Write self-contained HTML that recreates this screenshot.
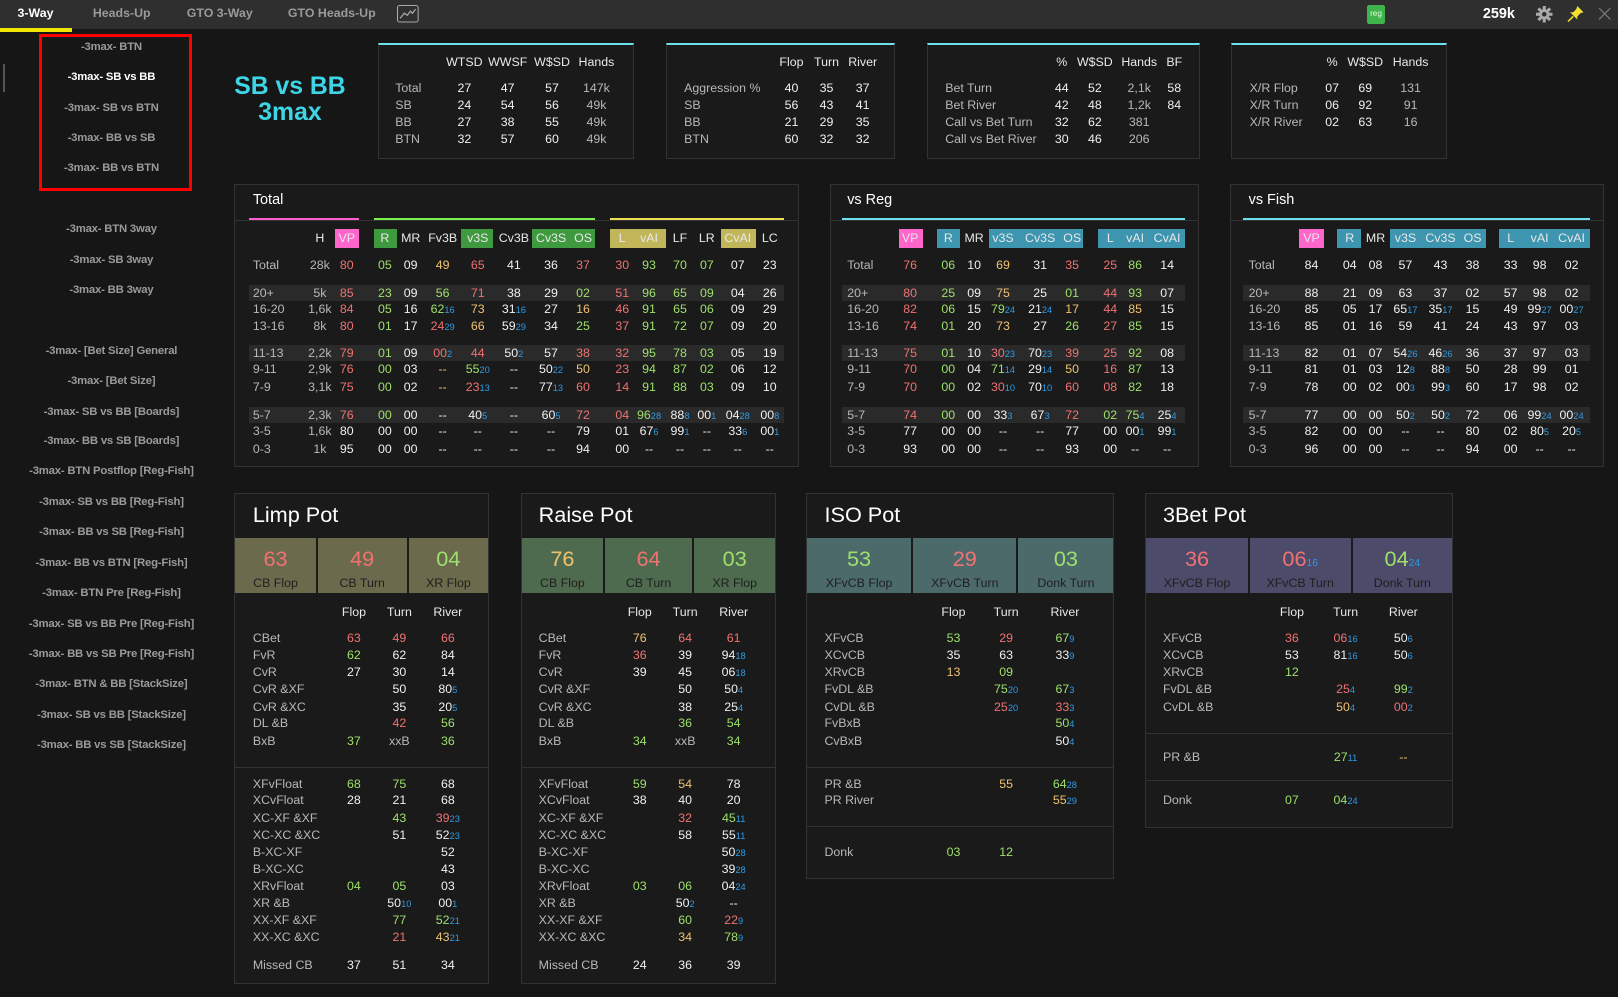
<!DOCTYPE html>
<html><head><meta charset="utf-8">
<style>
*{margin:0;padding:0;box-sizing:border-box}
html,body{background:#161616;overflow:hidden}
body{zoom:1.0319;width:1568px;height:966px;position:relative;font-family:"Liberation Sans",sans-serif;color:#f0f0f0;font-size:12px}
.a{position:absolute}
.top{left:0;top:0;width:1568px;height:28px;background:#2f2f2f}
.tab{position:absolute;top:6px;font-size:12px;font-weight:bold;color:#9a9a9a}
.side{position:absolute;left:108px;transform:translateX(-50%);font-size:11px;font-weight:bold;color:#9a9a9a;white-space:nowrap;letter-spacing:-0.2px}
.box{position:absolute;background:#1a1a1a;border:1px solid #333}
.cy{border-top:2px solid #6ee0ea}
.r{position:absolute;left:0;height:16px;line-height:16px;width:0}
.r>span{position:absolute;transform:translateX(-50%);white-space:nowrap;color:#f0f0f0}
.r>span:first-child{transform:none;color:#b8b8b8}
.r>span.rr{color:#f07272}.r>span.g{color:#9ee06b}.r>span.y{color:#f0c270}.r>span.k{color:#b8b8b8}
.r b{font-size:9px;color:#2e9be6;font-weight:normal}
.hd>span{color:#e8e8e8}
.band{position:absolute;height:16px;background:#2a2a2a}
.hb{position:absolute;top:222px;height:18px}
.ln{position:absolute;top:211px;height:2px}
.ptitle{position:absolute;font-size:21px;color:#fff}
.tile{position:absolute;top:521px;height:54px;text-align:center}
.tile .n{display:block;font-size:21px;margin-top:9px;line-height:24px;height:24px}
.tile .l{display:block;font-size:12px;color:#1e1e1e;line-height:14px;margin-top:4px}
.tile b{font-size:10px;color:#2e9be6;font-weight:normal;line-height:0}
.sep{position:absolute;height:1px;background:#333}
.S1>span:nth-child(1){left:383px}.S1>span:nth-child(2){left:450px}.S1>span:nth-child(3){left:492px}.S1>span:nth-child(4){left:535px}.S1>span:nth-child(5){left:578px}
.S2>span:nth-child(1){left:663px}.S2>span:nth-child(2){left:767px}.S2>span:nth-child(3){left:801px}.S2>span:nth-child(4){left:836px}
.S3>span:nth-child(1){left:916px}.S3>span:nth-child(2){left:1029px}.S3>span:nth-child(3){left:1061px}.S3>span:nth-child(4){left:1104px}.S3>span:nth-child(5){left:1138px}
.S4>span:nth-child(1){left:1211px}.S4>span:nth-child(2){left:1291px}.S4>span:nth-child(3){left:1323px}.S4>span:nth-child(4){left:1367px}
.TT>span:nth-child(1){left:245px}.TT>span:nth-child(2){left:310px;color:#b8b8b8}.TT>span:nth-child(3){left:336px}.TT>span:nth-child(4){left:373px}.TT>span:nth-child(5){left:398px}.TT>span:nth-child(6){left:429px}.TT>span:nth-child(7){left:463px}.TT>span:nth-child(8){left:498px}.TT>span:nth-child(9){left:534px}.TT>span:nth-child(10){left:565px}.TT>span:nth-child(11){left:603px}.TT>span:nth-child(12){left:629px}.TT>span:nth-child(13){left:659px}.TT>span:nth-child(14){left:685px}.TT>span:nth-child(15){left:715px}.TT>span:nth-child(16){left:746px}
.VR>span:nth-child(1){left:821px}.VR>span:nth-child(2){left:882px}.VR>span:nth-child(3){left:919px}.VR>span:nth-child(4){left:944px}.VR>span:nth-child(5){left:972px}.VR>span:nth-child(6){left:1008px}.VR>span:nth-child(7){left:1039px}.VR>span:nth-child(8){left:1076px}.VR>span:nth-child(9){left:1100px}.VR>span:nth-child(10){left:1131px}
.VF>span:nth-child(1){left:1210px}.VF>span:nth-child(2){left:1271px}.VF>span:nth-child(3){left:1308px}.VF>span:nth-child(4){left:1333px}.VF>span:nth-child(5){left:1362px}.VF>span:nth-child(6){left:1396px}.VF>span:nth-child(7){left:1427px}.VF>span:nth-child(8){left:1464px}.VF>span:nth-child(9){left:1492px}.VF>span:nth-child(10){left:1523px}
.LP>span:nth-child(1){left:245px}.LP>span:nth-child(2){left:343px}.LP>span:nth-child(3){left:387px}.LP>span:nth-child(4){left:434px}
.RP>span:nth-child(1){left:522px}.RP>span:nth-child(2){left:620px}.RP>span:nth-child(3){left:664px}.RP>span:nth-child(4){left:711px}
.IP>span:nth-child(1){left:799px}.IP>span:nth-child(2){left:924px}.IP>span:nth-child(3){left:975px}.IP>span:nth-child(4){left:1032px}
.BP>span:nth-child(1){left:1127px}.BP>span:nth-child(2){left:1252px}.BP>span:nth-child(3){left:1304px}.BP>span:nth-child(4){left:1360px}
.hd>span:first-child{color:#e8e8e8}
</style></head><body>

<div class="a top"></div>
<div class="a" style="left:0;top:27px;width:70px;height:4px;background:#f2e600"></div>
<div class="tab" style="left:17px;color:#fff">3-Way</div>
<div class="tab" style="left:90px">Heads-Up</div>
<div class="tab" style="left:181px">GTO 3-Way</div>
<div class="tab" style="left:279px">GTO Heads-Up</div>
<svg class="a" style="left:385px;top:5px" width="21" height="17" viewBox="0 0 21 17"><rect x="0.5" y="0.5" width="20" height="16" rx="2" fill="none" stroke="#aaa"/><path d="M3 13 L7 8 L10 10 L13 6 L15 8 L18 4" fill="none" stroke="#aaa" stroke-width="1.2"/></svg>
<div class="a" style="left:1325px;top:5px;width:17px;height:18px;background:#3fb44a;border-radius:2px;color:#dfd;font-size:8px;line-height:18px;text-align:center">reg</div>
<div class="a" style="left:1437px;top:6px;font-size:14px;font-weight:bold;color:#fff">259k</div>
<svg class="a" style="left:1489px;top:6px" width="16" height="16" viewBox="0 0 16 16"><g fill="#aaa"><circle cx="8" cy="8" r="5"/><rect x="6.5" y="0" width="3" height="16"/><rect x="0" y="6.5" width="16" height="3"/><rect x="6.5" y="0" width="3" height="16" transform="rotate(45 8 8)"/><rect x="6.5" y="0" width="3" height="16" transform="rotate(-45 8 8)"/></g><circle cx="8" cy="8" r="2.2" fill="#2f2f2f"/></svg>
<svg class="a" style="left:1519px;top:5px" width="17" height="17" viewBox="0 0 17 17"><path d="M10 1 L16 7 L13 8 L10 11 L10 14 L3 7 L6 7 L9 4 Z" fill="#f2e033"/><path d="M6 11 L1 16" stroke="#f2e033" stroke-width="1.5"/></svg>
<svg class="a" style="left:1549px;top:7px" width="13" height="13" viewBox="0 0 13 13"><path d="M1 1 L12 12 M12 1 L1 12" stroke="#777" stroke-width="1.2"/></svg>

<div class="a" style="left:3px;top:62px;width:2px;height:27px;background:#555"></div>
<div class="a" style="left:38px;top:33px;width:148px;height:152px;border:3px solid #f00"></div>
<div class="side" style="top:40px">-3max- BTN</div>
<div class="side" style="top:69px;color:#fff">-3max- SB vs BB</div>
<div class="side" style="top:99px">-3max- SB vs BTN</div>
<div class="side" style="top:128px">-3max- BB vs SB</div>
<div class="side" style="top:157px">-3max- BB vs BTN</div>
<div class="side" style="top:216px">-3max- BTN 3way</div>
<div class="side" style="top:246px">-3max- SB 3way</div>
<div class="side" style="top:275px">-3max- BB 3way</div>
<div class="side" style="top:334px">-3max- [Bet Size] General</div>
<div class="side" style="top:363px">-3max- [Bet Size]</div>
<div class="side" style="top:393px">-3max- SB vs BB [Boards]</div>
<div class="side" style="top:422px">-3max- BB vs SB [Boards]</div>
<div class="side" style="top:451px">-3max- BTN Postflop [Reg-Fish]</div>
<div class="side" style="top:481px">-3max- SB vs BB [Reg-Fish]</div>
<div class="side" style="top:510px">-3max- BB vs SB [Reg-Fish]</div>
<div class="side" style="top:540px">-3max- BB vs BTN [Reg-Fish]</div>
<div class="side" style="top:569px">-3max- BTN Pre [Reg-Fish]</div>
<div class="side" style="top:599px">-3max- SB vs BB Pre [Reg-Fish]</div>
<div class="side" style="top:628px">-3max- BB vs SB Pre [Reg-Fish]</div>
<div class="side" style="top:657px">-3max- BTN &amp; BB [StackSize]</div>
<div class="side" style="top:687px">-3max- SB vs BB [StackSize]</div>
<div class="side" style="top:716px">-3max- BB vs SB [StackSize]</div>

<div class="a" style="left:220px;top:72px;width:122px;text-align:center;color:#3dd6e6;font-size:24px;font-weight:bold;line-height:25px">SB vs BB<br>3max</div>

<div class="box cy" style="left:366px;top:42px;width:248px;height:112px"></div>
<div class="box cy" style="left:645px;top:42px;width:222px;height:112px"></div>
<div class="box cy" style="left:898px;top:42px;width:265px;height:112px"></div>
<div class="box cy" style="left:1193px;top:42px;width:209px;height:112px"></div>
<div class="r S1 hd" style="top:52px"><span></span><span>WTSD</span><span>WWSF</span><span>W$SD</span><span>Hands</span></div>
<div class="r S1" style="top:78px"><span>Total</span><span>27</span><span>47</span><span>57</span><span class="k">147k</span></div>
<div class="r S1" style="top:94px"><span>SB</span><span>24</span><span>54</span><span>56</span><span class="k">49k</span></div>
<div class="r S1" style="top:110px"><span>BB</span><span>27</span><span>38</span><span>55</span><span class="k">49k</span></div>
<div class="r S1" style="top:127px"><span>BTN</span><span>32</span><span>57</span><span>60</span><span class="k">49k</span></div>
<div class="r S2 hd" style="top:52px"><span></span><span>Flop</span><span>Turn</span><span>River</span></div>
<div class="r S2" style="top:78px"><span>Aggression %</span><span>40</span><span>35</span><span>37</span></div>
<div class="r S2" style="top:94px"><span>SB</span><span>56</span><span>43</span><span>41</span></div>
<div class="r S2" style="top:110px"><span>BB</span><span>21</span><span>29</span><span>35</span></div>
<div class="r S2" style="top:127px"><span>BTN</span><span>60</span><span>32</span><span>32</span></div>
<div class="r S3 hd" style="top:52px"><span></span><span>%</span><span>W$SD</span><span>Hands</span><span>BF</span></div>
<div class="r S3" style="top:78px"><span>Bet Turn</span><span>44</span><span>52</span><span class="k">2,1k</span><span>58</span></div>
<div class="r S3" style="top:94px"><span>Bet River</span><span>42</span><span>48</span><span class="k">1,2k</span><span>84</span></div>
<div class="r S3" style="top:110px"><span>Call vs Bet Turn</span><span>32</span><span>62</span><span class="k">381</span><span></span></div>
<div class="r S3" style="top:127px"><span>Call vs Bet River</span><span>30</span><span>46</span><span class="k">206</span><span></span></div>
<div class="r S4 hd" style="top:52px"><span></span><span>%</span><span>W$SD</span><span>Hands</span></div>
<div class="r S4" style="top:78px"><span>X/R Flop</span><span>07</span><span>69</span><span class="k">131</span></div>
<div class="r S4" style="top:94px"><span>X/R Turn</span><span>06</span><span>92</span><span class="k">91</span></div>
<div class="r S4" style="top:110px"><span>X/R River</span><span>02</span><span>63</span><span class="k">16</span></div>

<div class="box" style="left:227px;top:178px;width:547px;height:275px"></div>
<div class="box" style="left:804px;top:178px;width:358px;height:275px"></div>
<div class="box" style="left:1192px;top:178px;width:362px;height:275px"></div>
<div class="sep" style="left:228px;top:213px;width:545px"></div>
<div class="sep" style="left:805px;top:213px;width:356px"></div>
<div class="sep" style="left:1193px;top:213px;width:360px"></div>
<div class="a" style="left:245px;top:186px;font-size:14px;color:#fff">Total</div>
<div class="a" style="left:821px;top:186px;font-size:14px;color:#fff">vs Reg</div>
<div class="a" style="left:1210px;top:186px;font-size:14px;color:#fff">vs Fish</div>

<div class="ln" style="left:241px;width:107px;background:#ff5fcf"></div>
<div class="ln" style="left:362px;width:215px;background:#7cf04a"></div>
<div class="ln" style="left:591px;width:169px;background:#f0e050"></div>
<div class="ln" style="left:816px;width:332px;background:#6ee0ea"></div>
<div class="ln" style="left:1205px;width:336px;background:#6ee0ea"></div>

<div class="hb" style="left:325px;width:23px;background:#ff66cc"></div>
<div class="hb" style="left:362px;width:23px;background:#3f9a3f"></div>
<div class="hb" style="left:447px;width:31px;background:#3f9a3f"></div>
<div class="hb" style="left:516px;width:61px;background:#3f9a3f"></div>
<div class="hb" style="left:591px;width:54px;background:#c2b65a"></div>
<div class="hb" style="left:699px;width:34px;background:#c2b65a"></div>
<div class="hb" style="left:871px;width:23px;background:#ff66cc"></div>
<div class="hb" style="left:908px;width:22px;background:#3d95b0"></div>
<div class="hb" style="left:958px;width:92px;background:#3d95b0"></div>
<div class="hb" style="left:1064px;width:84px;background:#3d95b0"></div>
<div class="hb" style="left:1259px;width:24px;background:#ff66cc"></div>
<div class="hb" style="left:1296px;width:23px;background:#3d95b0"></div>
<div class="hb" style="left:1347px;width:93px;background:#3d95b0"></div>
<div class="hb" style="left:1453px;width:88px;background:#3d95b0"></div>

<div class="band" style="left:241px;top:276px;width:519px"></div>
<div class="band" style="left:241px;top:334px;width:519px"></div>
<div class="band" style="left:241px;top:394px;width:519px"></div>
<div class="band" style="left:816px;top:276px;width:332px"></div>
<div class="band" style="left:816px;top:334px;width:332px"></div>
<div class="band" style="left:816px;top:394px;width:332px"></div>
<div class="band" style="left:1205px;top:276px;width:336px"></div>
<div class="band" style="left:1205px;top:334px;width:336px"></div>
<div class="band" style="left:1205px;top:394px;width:336px"></div>

<div class="r TT hd" style="top:223px"><span></span><span style="color:#e8e8e8">H</span><span>VP</span><span>R</span><span>MR</span><span>Fv3B</span><span>v3S</span><span>Cv3B</span><span>Cv3S</span><span>OS</span><span>L</span><span>vAI</span><span>LF</span><span>LR</span><span>CvAI</span><span>LC</span></div>
<div class="r TT" style="top:249px"><span>Total</span><span>28k</span><span class="rr">80</span><span class="g">05</span><span>09</span><span class="y">49</span><span class="rr">65</span><span>41</span><span>36</span><span class="rr">37</span><span class="rr">30</span><span class="g">93</span><span class="g">70</span><span class="g">07</span><span>07</span><span>23</span></div>
<div class="r TT" style="top:276px"><span>20+</span><span>5k</span><span class="rr">85</span><span class="g">23</span><span>09</span><span class="g">56</span><span class="rr">71</span><span>38</span><span>29</span><span class="g">02</span><span class="rr">51</span><span class="g">96</span><span class="g">65</span><span class="g">09</span><span>04</span><span>26</span></div>
<div class="r TT" style="top:292px"><span>16-20</span><span>1,6k</span><span class="rr">84</span><span class="g">05</span><span>16</span><span class="g">62<b>16</b></span><span class="y">73</span><span>31<b>16</b></span><span>27</span><span class="y">16</span><span class="rr">46</span><span class="g">91</span><span class="g">65</span><span class="g">06</span><span>09</span><span>29</span></div>
<div class="r TT" style="top:308px"><span>13-16</span><span>8k</span><span class="rr">80</span><span class="g">01</span><span>17</span><span class="rr">24<b>29</b></span><span class="y">66</span><span>59<b>29</b></span><span>34</span><span class="g">25</span><span class="rr">37</span><span class="g">91</span><span class="g">72</span><span class="g">07</span><span>09</span><span>20</span></div>
<div class="r TT" style="top:334px"><span>11-13</span><span>2,2k</span><span class="rr">79</span><span class="g">01</span><span>09</span><span class="rr">00<b>2</b></span><span class="rr">44</span><span>50<b>2</b></span><span>57</span><span class="rr">38</span><span class="rr">32</span><span class="g">95</span><span class="g">78</span><span class="g">03</span><span>05</span><span>19</span></div>
<div class="r TT" style="top:350px"><span>9-11</span><span>2,9k</span><span class="rr">76</span><span class="g">00</span><span>03</span><span class="y">--</span><span class="g">55<b>20</b></span><span>--</span><span>50<b>22</b></span><span class="y">50</span><span class="rr">23</span><span class="g">94</span><span class="g">87</span><span class="g">02</span><span>06</span><span>12</span></div>
<div class="r TT" style="top:367px"><span>7-9</span><span>3,1k</span><span class="rr">75</span><span class="g">00</span><span>02</span><span class="y">--</span><span class="rr">23<b>13</b></span><span>--</span><span>77<b>13</b></span><span class="rr">60</span><span class="rr">14</span><span class="g">91</span><span class="g">88</span><span class="g">03</span><span>09</span><span>10</span></div>
<div class="r TT" style="top:394px"><span>5-7</span><span>2,3k</span><span class="rr">76</span><span class="g">00</span><span>00</span><span>--</span><span>40<b>5</b></span><span>--</span><span>60<b>5</b></span><span class="rr">72</span><span class="rr">04</span><span class="g">96<b>28</b></span><span>88<b>8</b></span><span>00<b>1</b></span><span>04<b>28</b></span><span>00<b>8</b></span></div>
<div class="r TT" style="top:410px"><span>3-5</span><span>1,6k</span><span>80</span><span>00</span><span>00</span><span>--</span><span>--</span><span>--</span><span>--</span><span>79</span><span>01</span><span>67<b>6</b></span><span>99<b>1</b></span><span>--</span><span>33<b>6</b></span><span>00<b>1</b></span></div>
<div class="r TT" style="top:427px"><span>0-3</span><span>1k</span><span>95</span><span>00</span><span>00</span><span>--</span><span>--</span><span>--</span><span>--</span><span>94</span><span>00</span><span>--</span><span>--</span><span>--</span><span>--</span><span>--</span></div>

<div class="r VR hd" style="top:223px"><span></span><span>VP</span><span>R</span><span>MR</span><span>v3S</span><span>Cv3S</span><span>OS</span><span>L</span><span>vAI</span><span>CvAI</span></div>
<div class="r VR" style="top:249px"><span>Total</span><span class="rr">76</span><span class="g">06</span><span>10</span><span class="y">69</span><span>31</span><span class="rr">35</span><span class="rr">25</span><span class="g">86</span><span>14</span></div>
<div class="r VR" style="top:276px"><span>20+</span><span class="rr">80</span><span class="g">25</span><span>09</span><span class="y">75</span><span>25</span><span class="g">01</span><span class="rr">44</span><span class="g">93</span><span>07</span></div>
<div class="r VR" style="top:292px"><span>16-20</span><span class="rr">82</span><span class="g">06</span><span>15</span><span class="g">79<b>24</b></span><span>21<b>24</b></span><span class="y">17</span><span class="rr">44</span><span class="y">85</span><span>15</span></div>
<div class="r VR" style="top:308px"><span>13-16</span><span class="rr">74</span><span class="g">01</span><span>20</span><span class="y">73</span><span>27</span><span class="g">26</span><span class="rr">27</span><span class="g">85</span><span>15</span></div>
<div class="r VR" style="top:334px"><span>11-13</span><span class="rr">75</span><span class="g">01</span><span>10</span><span class="rr">30<b>23</b></span><span>70<b>23</b></span><span class="rr">39</span><span class="rr">25</span><span class="g">92</span><span>08</span></div>
<div class="r VR" style="top:350px"><span>9-11</span><span class="rr">70</span><span class="g">00</span><span>04</span><span class="g">71<b>14</b></span><span>29<b>14</b></span><span class="y">50</span><span class="rr">16</span><span class="g">87</span><span>13</span></div>
<div class="r VR" style="top:367px"><span>7-9</span><span class="rr">70</span><span class="g">00</span><span>02</span><span class="rr">30<b>10</b></span><span>70<b>10</b></span><span class="rr">60</span><span class="rr">08</span><span class="g">82</span><span>18</span></div>
<div class="r VR" style="top:394px"><span>5-7</span><span class="rr">74</span><span class="g">00</span><span>00</span><span>33<b>3</b></span><span>67<b>3</b></span><span class="rr">72</span><span class="g">02</span><span class="g">75<b>4</b></span><span>25<b>4</b></span></div>
<div class="r VR" style="top:410px"><span>3-5</span><span>77</span><span>00</span><span>00</span><span>--</span><span>--</span><span>77</span><span>00</span><span>00<b>1</b></span><span>99<b>1</b></span></div>
<div class="r VR" style="top:427px"><span>0-3</span><span>93</span><span>00</span><span>00</span><span>--</span><span>--</span><span>93</span><span>00</span><span>--</span><span>--</span></div>

<div class="r VF hd" style="top:223px"><span></span><span>VP</span><span>R</span><span>MR</span><span>v3S</span><span>Cv3S</span><span>OS</span><span>L</span><span>vAI</span><span>CvAI</span></div>
<div class="r VF" style="top:249px"><span>Total</span><span>84</span><span>04</span><span>08</span><span>57</span><span>43</span><span>38</span><span>33</span><span>98</span><span>02</span></div>
<div class="r VF" style="top:276px"><span>20+</span><span>88</span><span>21</span><span>09</span><span>63</span><span>37</span><span>02</span><span>57</span><span>98</span><span>02</span></div>
<div class="r VF" style="top:292px"><span>16-20</span><span>85</span><span>05</span><span>17</span><span>65<b>17</b></span><span>35<b>17</b></span><span>15</span><span>49</span><span>99<b>27</b></span><span>00<b>27</b></span></div>
<div class="r VF" style="top:308px"><span>13-16</span><span>85</span><span>01</span><span>16</span><span>59</span><span>41</span><span>24</span><span>43</span><span>97</span><span>03</span></div>
<div class="r VF" style="top:334px"><span>11-13</span><span>82</span><span>01</span><span>07</span><span>54<b>26</b></span><span>46<b>26</b></span><span>36</span><span>37</span><span>97</span><span>03</span></div>
<div class="r VF" style="top:350px"><span>9-11</span><span>81</span><span>01</span><span>03</span><span>12<b>8</b></span><span>88<b>8</b></span><span>50</span><span>28</span><span>99</span><span>01</span></div>
<div class="r VF" style="top:367px"><span>7-9</span><span>78</span><span>00</span><span>02</span><span>00<b>3</b></span><span>99<b>3</b></span><span>60</span><span>17</span><span>98</span><span>02</span></div>
<div class="r VF" style="top:394px"><span>5-7</span><span>77</span><span>00</span><span>00</span><span>50<b>2</b></span><span>50<b>2</b></span><span>72</span><span>06</span><span>99<b>24</b></span><span>00<b>24</b></span></div>
<div class="r VF" style="top:410px"><span>3-5</span><span>82</span><span>00</span><span>00</span><span>--</span><span>--</span><span>80</span><span>02</span><span>80<b>5</b></span><span>20<b>5</b></span></div>
<div class="r VF" style="top:427px"><span>0-3</span><span>96</span><span>00</span><span>00</span><span>--</span><span>--</span><span>94</span><span>00</span><span>--</span><span>--</span></div>

<div class="box" style="left:227px;top:478px;width:247px;height:476px"></div>
<div class="box" style="left:505px;top:478px;width:247px;height:476px"></div>
<div class="box" style="left:781px;top:478px;width:299px;height:374px"></div>
<div class="box" style="left:1110px;top:478px;width:298px;height:324px"></div>
<div class="ptitle" style="left:245px;top:486px">Limp Pot</div>
<div class="ptitle" style="left:522px;top:486px">Raise Pot</div>
<div class="ptitle" style="left:799px;top:486px">ISO Pot</div>
<div class="ptitle" style="left:1127px;top:486px">3Bet Pot</div>

<div class="tile" style="left:228px;width:78px;background:#6b6a4d"><span class="n" style="color:#f07272">63</span><span class="l">CB Flop</span></div>
<div class="tile" style="left:308px;width:86px;background:#6b6a4d"><span class="n" style="color:#f07272">49</span><span class="l">CB Turn</span></div>
<div class="tile" style="left:396px;width:77px;background:#6b6a4d"><span class="n" style="color:#9ee06b">04</span><span class="l">XR Flop</span></div>
<div class="tile" style="left:506px;width:78px;background:#4f6b4f"><span class="n" style="color:#f0c270">76</span><span class="l">CB Flop</span></div>
<div class="tile" style="left:586px;width:85px;background:#4f6b4f"><span class="n" style="color:#f07272">64</span><span class="l">CB Turn</span></div>
<div class="tile" style="left:673px;width:78px;background:#4f6b4f"><span class="n" style="color:#9ee06b">03</span><span class="l">XR Flop</span></div>
<div class="tile" style="left:782px;width:101px;background:#4d6a6b"><span class="n" style="color:#9ee06b">53</span><span class="l">XFvCB Flop</span></div>
<div class="tile" style="left:885px;width:100px;background:#4d6a6b"><span class="n" style="color:#f07272">29</span><span class="l">XFvCB Turn</span></div>
<div class="tile" style="left:987px;width:92px;background:#4d6a6b"><span class="n" style="color:#9ee06b">03</span><span class="l">Donk Turn</span></div>
<div class="tile" style="left:1111px;width:98px;background:#4c4b69"><span class="n" style="color:#f07272">36</span><span class="l">XFvCB Flop</span></div>
<div class="tile" style="left:1211px;width:98px;background:#4c4b69"><span class="n" style="color:#f07272">06<b>16</b></span><span class="l">XFvCB Turn</span></div>
<div class="tile" style="left:1311px;width:96px;background:#4c4b69"><span class="n" style="color:#9ee06b">04<b>24</b></span><span class="l">Donk Turn</span></div>

<div class="sep" style="left:228px;top:743px;width:245px"></div>
<div class="sep" style="left:506px;top:743px;width:245px"></div>
<div class="sep" style="left:782px;top:743px;width:297px"></div>
<div class="sep" style="left:782px;top:800px;width:297px"></div>
<div class="sep" style="left:1111px;top:710px;width:296px"></div>
<div class="sep" style="left:1111px;top:756px;width:296px"></div>

<div class="r LP hd" style="top:585px"><span></span><span>Flop</span><span>Turn</span><span>River</span></div>
<div class="r LP" style="top:611px"><span>CBet</span><span class="rr">63</span><span class="rr">49</span><span class="rr">66</span></div>
<div class="r LP" style="top:627px"><span>FvR</span><span class="g">62</span><span>62</span><span>84</span></div>
<div class="r LP" style="top:643px"><span>CvR</span><span>27</span><span>30</span><span>14</span></div>
<div class="r LP" style="top:660px"><span>CvR &amp;XF</span><span></span><span>50</span><span>80<b>5</b></span></div>
<div class="r LP" style="top:677px"><span>CvR &amp;XC</span><span></span><span>35</span><span>20<b>5</b></span></div>
<div class="r LP" style="top:693px"><span>DL &amp;B</span><span></span><span class="rr">42</span><span class="g">56</span></div>
<div class="r LP" style="top:710px"><span>BxB</span><span class="g">37</span><span class="k">xxB</span><span class="g">36</span></div>
<div class="r LP" style="top:752px"><span>XFvFloat</span><span class="g">68</span><span class="g">75</span><span>68</span></div>
<div class="r LP" style="top:768px"><span>XCvFloat</span><span>28</span><span>21</span><span>68</span></div>
<div class="r LP" style="top:785px"><span>XC-XF &amp;XF</span><span></span><span class="g">43</span><span class="rr">39<b>23</b></span></div>
<div class="r LP" style="top:801px"><span>XC-XC &amp;XC</span><span></span><span>51</span><span>52<b>23</b></span></div>
<div class="r LP" style="top:818px"><span>B-XC-XF</span><span></span><span></span><span>52</span></div>
<div class="r LP" style="top:834px"><span>B-XC-XC</span><span></span><span></span><span>43</span></div>
<div class="r LP" style="top:851px"><span>XRvFloat</span><span class="g">04</span><span class="g">05</span><span>03</span></div>
<div class="r LP" style="top:867px"><span>XR &amp;B</span><span></span><span>50<b>10</b></span><span>00<b>1</b></span></div>
<div class="r LP" style="top:884px"><span>XX-XF &amp;XF</span><span></span><span class="g">77</span><span class="g">52<b>21</b></span></div>
<div class="r LP" style="top:900px"><span>XX-XC &amp;XC</span><span></span><span class="rr">21</span><span class="y">43<b>21</b></span></div>
<div class="r LP" style="top:927px"><span>Missed CB</span><span>37</span><span>51</span><span>34</span></div>

<div class="r RP hd" style="top:585px"><span></span><span>Flop</span><span>Turn</span><span>River</span></div>
<div class="r RP" style="top:611px"><span>CBet</span><span class="y">76</span><span class="rr">64</span><span class="rr">61</span></div>
<div class="r RP" style="top:627px"><span>FvR</span><span class="rr">36</span><span>39</span><span>94<b>18</b></span></div>
<div class="r RP" style="top:643px"><span>CvR</span><span>39</span><span>45</span><span>06<b>18</b></span></div>
<div class="r RP" style="top:660px"><span>CvR &amp;XF</span><span></span><span>50</span><span>50<b>4</b></span></div>
<div class="r RP" style="top:677px"><span>CvR &amp;XC</span><span></span><span>38</span><span>25<b>4</b></span></div>
<div class="r RP" style="top:693px"><span>DL &amp;B</span><span></span><span class="g">36</span><span class="g">54</span></div>
<div class="r RP" style="top:710px"><span>BxB</span><span class="g">34</span><span class="k">xxB</span><span class="g">34</span></div>
<div class="r RP" style="top:752px"><span>XFvFloat</span><span class="g">59</span><span class="y">54</span><span>78</span></div>
<div class="r RP" style="top:768px"><span>XCvFloat</span><span>38</span><span>40</span><span>20</span></div>
<div class="r RP" style="top:785px"><span>XC-XF &amp;XF</span><span></span><span class="rr">32</span><span class="g">45<b>11</b></span></div>
<div class="r RP" style="top:801px"><span>XC-XC &amp;XC</span><span></span><span>58</span><span>55<b>11</b></span></div>
<div class="r RP" style="top:818px"><span>B-XC-XF</span><span></span><span></span><span>50<b>28</b></span></div>
<div class="r RP" style="top:834px"><span>B-XC-XC</span><span></span><span></span><span>39<b>28</b></span></div>
<div class="r RP" style="top:851px"><span>XRvFloat</span><span class="g">03</span><span class="g">06</span><span>04<b>24</b></span></div>
<div class="r RP" style="top:867px"><span>XR &amp;B</span><span></span><span>50<b>2</b></span><span>--</span></div>
<div class="r RP" style="top:884px"><span>XX-XF &amp;XF</span><span></span><span class="g">60</span><span class="rr">22<b>9</b></span></div>
<div class="r RP" style="top:900px"><span>XX-XC &amp;XC</span><span></span><span class="y">34</span><span class="g">78<b>9</b></span></div>
<div class="r RP" style="top:927px"><span>Missed CB</span><span>24</span><span>36</span><span>39</span></div>

<div class="r IP hd" style="top:585px"><span></span><span>Flop</span><span>Turn</span><span>River</span></div>
<div class="r IP" style="top:611px"><span>XFvCB</span><span class="g">53</span><span class="rr">29</span><span class="g">67<b>9</b></span></div>
<div class="r IP" style="top:627px"><span>XCvCB</span><span>35</span><span>63</span><span>33<b>9</b></span></div>
<div class="r IP" style="top:643px"><span>XRvCB</span><span class="y">13</span><span class="g">09</span><span></span></div>
<div class="r IP" style="top:660px"><span>FvDL &amp;B</span><span></span><span class="g">75<b>20</b></span><span class="g">67<b>3</b></span></div>
<div class="r IP" style="top:677px"><span>CvDL &amp;B</span><span></span><span class="rr">25<b>20</b></span><span class="rr">33<b>3</b></span></div>
<div class="r IP" style="top:693px"><span>FvBxB</span><span></span><span></span><span class="g">50<b>4</b></span></div>
<div class="r IP" style="top:710px"><span>CvBxB</span><span></span><span></span><span>50<b>4</b></span></div>
<div class="r IP" style="top:752px"><span>PR &amp;B</span><span></span><span class="y">55</span><span class="g">64<b>28</b></span></div>
<div class="r IP" style="top:768px"><span>PR River</span><span></span><span></span><span class="y">55<b>29</b></span></div>
<div class="r IP" style="top:818px"><span>Donk</span><span class="g">03</span><span class="g">12</span><span></span></div>

<div class="r BP hd" style="top:585px"><span></span><span>Flop</span><span>Turn</span><span>River</span></div>
<div class="r BP" style="top:611px"><span>XFvCB</span><span class="rr">36</span><span class="rr">06<b>16</b></span><span>50<b>6</b></span></div>
<div class="r BP" style="top:627px"><span>XCvCB</span><span>53</span><span>81<b>16</b></span><span>50<b>6</b></span></div>
<div class="r BP" style="top:643px"><span>XRvCB</span><span class="g">12</span><span></span><span></span></div>
<div class="r BP" style="top:660px"><span>FvDL &amp;B</span><span></span><span class="rr">25<b>4</b></span><span class="g">99<b>2</b></span></div>
<div class="r BP" style="top:677px"><span>CvDL &amp;B</span><span></span><span class="y">50<b>4</b></span><span class="rr">00<b>2</b></span></div>
<div class="r BP" style="top:726px"><span>PR &amp;B</span><span></span><span class="g">27<b>11</b></span><span class="y">--</span></div>
<div class="r BP" style="top:768px"><span>Donk</span><span class="g">07</span><span class="g">04<b>24</b></span><span></span></div>

</body></html>
